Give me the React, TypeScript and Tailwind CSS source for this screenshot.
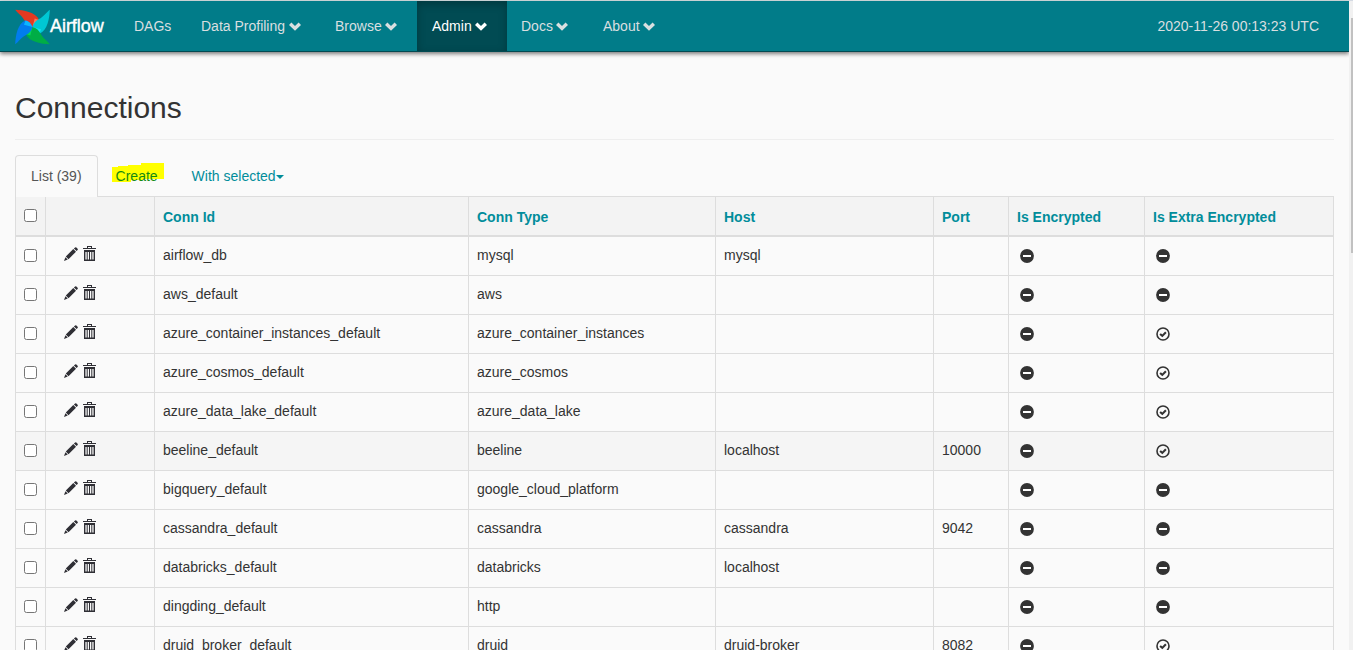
import React from "react";

type Row = { id: string; type: string; host?: string; port?: string; extra?: boolean };

const rows: Row[] = [
  { id: "airflow_db", type: "mysql", host: "mysql" },
  { id: "aws_default", type: "aws" },
  { id: "azure_container_instances_default", type: "azure_container_instances", extra: true },
  { id: "azure_cosmos_default", type: "azure_cosmos", extra: true },
  { id: "azure_data_lake_default", type: "azure_data_lake", extra: true },
  { id: "beeline_default", type: "beeline", host: "localhost", port: "10000", extra: true },
  { id: "bigquery_default", type: "google_cloud_platform" },
  { id: "cassandra_default", type: "cassandra", host: "cassandra", port: "9042" },
  { id: "databricks_default", type: "databricks", host: "localhost" },
  { id: "dingding_default", type: "http" },
  { id: "druid_broker_default", type: "druid", host: "druid-broker", port: "8082", extra: true },
];

const blades = [
  { angle: 0, dark: "#e43921", light: "#ff7557" },
  { angle: 90, dark: "#00c7d4", light: "#11e1ee" },
  { angle: 180, dark: "#00ad46", light: "#04d659" },
  { angle: 270, dark: "#017cee", light: "#0cb6ff" },
];

const gridCols = "grid grid-cols-[30px_109px_314px_247px_218px_75px_136px_190px]";

function Chevron() {
  return (
    <svg className="ml-[3.500px] h-[9px] w-3 shrink-0" viewBox="0 0 12 9" fill="currentColor">
      <path d="M2.400.5 6 4 9.600.500 12 2.900 6 8.700 0 2.900Z" />
    </svg>
  );
}

function Logo() {
  return (
    <svg className="h-9 w-9 shrink-0" viewBox="0 0 36 36">
      {blades.map((b) => (
        <g key={b.angle} transform={`translate(17.500 18) rotate(${b.angle})`}>
          <path d="M-17.300-17.300C-9-17 3-15 6.500-7.500Q6.500-3 0 0C-4-1-6-3-8-6.500-10-11-15-14-17.300-17.300Z" fill={b.dark} />
          <path d="M0 0 2.200-8.500 6.500-7Q6.500-3 0 0Z" fill={b.light} />
        </g>
      ))}
    </svg>
  );
}

function Pencil() {
  return (
    <svg className="h-[14px] w-[14px]" viewBox="0 0 14 14" fill="#2f2f35">
      <path d="M9.900 1.400 11.100.4Q11.800-.1 12.400.5L13.600 1.700Q14.200 2.300 13.600 3L12.600 4.100ZM9.300 2 12 4.700 4.500 12.200 1.800 9.500ZM1.400 10.200 3.800 12.600 0 14Z" />
    </svg>
  );
}

function Trash() {
  return (
    <svg className="-mt-px h-[15px] w-[13px]" viewBox="0 0 13 15" fill="#2f2f35">
      <path d="M4 0H9V2H13V3H0V2H4ZM5 1V2H8V1ZM1 4H12V6H1Z" />
      <path d="M1 5H2.400V15H1ZM3.700 5H4.700V14H3.700ZM6 5H7V14H6ZM8.300 5H9.300V14H8.300ZM10.600 5H12V15H10.600ZM1 13.600H12V15H1Z" />
    </svg>
  );
}

function Status({ ok = false }: { ok?: boolean }) {
  return (
    <svg className="ml-[3px] mt-3 block h-[14px] w-[14px]" viewBox="0 0 14 14">
      {ok ? (
        <>
          <circle cx="7" cy="7" r="6" fill="none" stroke="#333" strokeWidth="1.600" />
          <path d="M4.100 7 6.300 8.900 9.900 5.300" fill="none" stroke="#333" strokeWidth="2.100" />
        </>
      ) : (
        <>
          <circle cx="7" cy="7" r="6.900" fill="#333" />
          <path d="M3 6H11V8H3Z" fill="#fff" />
        </>
      )}
    </svg>
  );
}

function Check() {
  return (
    <div className="border-l border-[#ddd] pl-2 pt-3">
      <input
        type="checkbox"
        className="block h-[13px] w-[13px] appearance-none rounded-[2.5px] border border-[#767676] bg-white"
      />
    </div>
  );
}

function Cell({ children, last = false }: { children?: React.ReactNode; last?: boolean }) {
  return (
    <div className={"whitespace-nowrap border-l border-[#ddd] pl-2 " + (last ? "border-r" : "")}>{children}</div>
  );
}

function NavItem({ label, className, menu = true }: { label: string; className: string; menu?: boolean }) {
  return (
    <a className={"flex h-full shrink-0 items-center whitespace-nowrap " + className}>
      {label}
      {menu && <Chevron />}
    </a>
  );
}

export default function App() {
  return (
    <div className="flex h-[650px] w-full overflow-hidden bg-[#fafafa] font-['Liberation_Sans',Arial,sans-serif] text-sm leading-5 text-[#333]">
      <div className="min-w-0 flex-1 border-t border-[#d5dfe1]">
        <nav className="flex h-[51px] border-b border-[#024a52] bg-[#017c89] pl-[15px] text-[#d9dfe0] shadow-[0_2px_4px_rgba(0,0,0,0.5)]">
          <a className="flex w-[104px] shrink-0 pt-2 text-white">
            <Logo />
            <span className="-ml-px pt-[7px] text-lg leading-5 tracking-[-0.05px] [-webkit-text-stroke:0.4px_white]">Airflow</span>
          </a>
          <NavItem label="DAGs" className="w-[67px] pl-[15px]" menu={false} />
          <NavItem label="Data Profiling" className="w-[134px] pl-[15px]" />
          <NavItem label="Browse" className="w-[97px] pl-[15px]" />
          <NavItem
            label="Admin"
            className="w-[90px] bg-[#014b53] pl-[15px] text-white shadow-[inset_0_3px_9px_rgba(0,0,0,0.25)]"
          />
          <NavItem label="Docs" className="w-[81px] pl-[14px]" />
          <NavItem label="About" className="w-[90px] pl-[15px]" />
          <span className="ml-auto flex items-center whitespace-nowrap pr-[30px]">2020-11-26 00:13:23 UTC</span>
        </nav>

        <main className="pl-[15px] pr-[15px]">
          <h2 className="h-[88px] border-b border-[#eee] pt-[39px] text-[30px] leading-[33px]">Connections</h2>
          <div className="mt-[15px] flex h-[41px]">
            <div className="z-10 h-[42px] w-[83px] rounded-t border border-b-0 border-[#ddd] bg-[#fafafa] pl-[15px] pt-[10px] text-[#555]">
              List (39)
            </div>
            <div className="relative w-[79px] pl-[17.600px] pt-[11px]">
              <svg className="absolute left-[14px] top-2 h-5 w-[52px]" viewBox="0 0 52 20">
                <path d="M0 4H6V3H16V2H29V0H52V16H32V17H19V19H0Z" fill="#ff0" />
              </svg>
              <span className="relative text-[#148b12]">Create</span>
            </div>
            <div className="flex pl-[14.600px] pt-[11px] text-[#018d9b]">
              With selected
              <span className="mt-[9px] h-0 w-0 border-x-4 border-t-4 border-x-transparent border-t-[#018d9b]" />
            </div>
          </div>
          <div>
            <div
              className={gridCols + " h-[41px] border-b-2 border-t border-[#ddd] bg-[#f3f3f3] font-bold leading-[40px] text-[#018d9b]"}
            >
              <Check />
              <Cell />
              <Cell>Conn Id</Cell>
              <Cell>Conn Type</Cell>
              <Cell>Host</Cell>
              <Cell>Port</Cell>
              <Cell>Is Encrypted</Cell>
              <Cell last>Is Extra Encrypted</Cell>
            </div>
            {rows.map((r) => (
              <div
                key={r.id}
                className={gridCols + " h-[39px] border-b border-[#ddd] leading-9 " + (r.id === "beeline_default" ? "bg-[#f5f5f5]" : "")}
              >
                <Check />
                <div className="flex gap-[5px] border-l border-[#ddd] pl-[18px] pt-[10px]">
                  <Pencil />
                  <Trash />
                </div>
                <Cell>{r.id}</Cell>
                <Cell>{r.type}</Cell>
                <Cell>{r.host}</Cell>
                <Cell>{r.port}</Cell>
                <Cell>
                  <Status />
                </Cell>
                <Cell last>
                  <Status ok={r.extra} />
                </Cell>
              </div>
            ))}
          </div>
        </main>
      </div>
      <div className="w-1 shrink-0 border-t border-[#d5dae3] bg-[#f1f1f1] pl-[2px] pt-[17px]">
        <div className="h-[235px] bg-[#c1c1c1]" />
      </div>
    </div>
  );
}
